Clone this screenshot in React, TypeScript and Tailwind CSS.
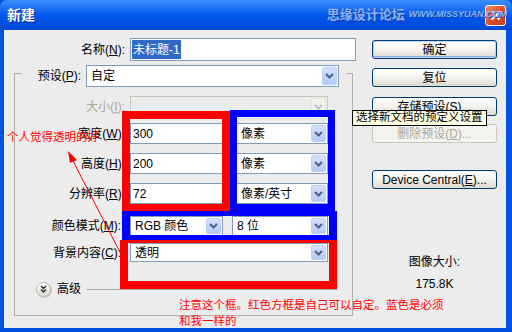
import clsx from "clsx";
import type { ReactNode } from "react";

const FONT = "font-['Liberation_Sans','Noto_Sans_CJK_SC',sans-serif]";

function Chevron({ muted }: { muted?: boolean }) {
    return (
        <svg width="9" height="6" viewBox="0 0 9 6">
            <path d="M1 1l3.5 3.5L8 1" fill="none" stroke={muted ? "#C3C1B6" : "#4D6185"} strokeWidth="2" />
        </svg>
    );
}

function Select({ value, className, disabled }: { value?: string; className: string; disabled?: boolean }) {
    return (
        <div
            className={clsx(
                "flex items-center border p-[1px]",
                disabled ? "border-[#C9C7BA] bg-[#ECECEC]" : "border-[#7F9DB9] bg-white",
                className
            )}
        >
            <span className="flex-1 pl-[3px] leading-none whitespace-nowrap">{value}</span>
            <span
                className={clsx(
                    "flex h-full w-[15px] items-center justify-center rounded-[2px] border",
                    disabled
                        ? "border-[#E4E2D8] bg-[#F1F0EA]"
                        : "border-[#BBCEF8] bg-gradient-to-b from-[#D3E1FD] to-[#B4CAF7]"
                )}
            >
                <Chevron muted={disabled} />
            </span>
        </div>
    );
}

function Input({ value, className }: { value: string; className: string }) {
    return (
        <div className={clsx("flex items-center border border-[#7F9DB9] bg-white pl-[2px]", className)}>
            <span className="leading-none">{value}</span>
        </div>
    );
}

function Btn({ children, def, disabled, className }: { children: ReactNode; def?: boolean; disabled?: boolean; className?: string }) {
    return (
        <div
            className={clsx(
                "flex w-[125px] h-[19px] items-center justify-center rounded-[3px] border leading-none",
                disabled
                    ? "border-[#C9C7BA] bg-[#F4F3EE] text-[#ACA899]"
                    : "border-[#003C74] bg-gradient-to-b from-white via-[#F4F3EE] to-[#DCD9CD]",
                def && "shadow-[inset_0_0_0_1px_#BCD4F6,inset_0_-1px_0_1px_#89ADE4]",
                className
            )}
        >
            {children}
        </div>
    );
}

function Row({ label, mt, h, children }: { label: ReactNode; mt: string; h: string; children: ReactNode }) {
    return (
        <div className={clsx("flex items-center", mt, h)}>
            <span className="w-[110px] text-right whitespace-nowrap">{label}</span>
            <div className="ml-[5px] flex h-full items-center">{children}</div>
        </div>
    );
}

function TitleBar() {
    return (
        <div className="relative flex h-[30px] items-center rounded-t-[7px] bg-gradient-to-b from-[#3D8EF8] via-[#0058EE] to-[#0047D6] px-[7px]">
            <span className="text-[14px] font-bold text-white [text-shadow:1px_1px_0_#0A1E8C]">新建</span>
            <div className="absolute right-[6px] top-[5px] flex h-[21px] w-[21px] items-center justify-center rounded-[3px] border border-white bg-gradient-to-br from-[#F08A6A] via-[#E0502A] to-[#C8381A]">
                <svg width="11" height="11" viewBox="0 0 11 11">
                    <path d="M1.5 1.5l8 8M9.5 1.5l-8 8" stroke="white" strokeWidth="2.2" />
                </svg>
            </div>
            <span className="relative ml-auto mr-[4px] text-[13px] font-bold text-[#8DB6F2] [text-shadow:1px_1px_0_#1C3FA8]">
                思缘设计论坛
            </span>
            <span className="relative mr-[-2px] text-[9px] font-bold italic text-[#8DB6F2] [text-shadow:1px_1px_0_#1C3FA8]">
                WWW.MISSYUAN.COM
            </span>
        </div>
    );
}

export default function App() {
    return (
        <div className={clsx("relative flex h-[332px] w-[512px] flex-col overflow-hidden bg-[#0053E1] text-[12px] text-black", FONT)}>
            <TitleBar />
            <div className="mb-[4px] ml-[4px] mr-[6px] flex flex-1 bg-[#ECECEC]">
                {/* left column */}
                <div className="flex w-[354px] flex-col">
                    <div className="mt-[8px] flex h-[23px] items-center">
                        <span className="w-[121px] text-right">
                            名称(<u>N</u>):
                        </span>
                        <div className="ml-[5px] flex h-full w-[226px] items-center border border-[#7F9DB9] bg-white p-[1px]">
                            <span className="flex h-full items-center bg-[#316AC5] px-[1px] text-white">未标题-1</span>
                        </div>
                    </div>

                    <div className="ml-[10px] mt-[12px] flex w-[339px] flex-col border border-[#B2B0A6] pb-[18px]">
                        <div className="-mt-[9px] ml-[7px] flex h-[22px] w-[325px] items-center bg-[#ECECEC]">
                            <span className="w-[59px] text-right">
                                预设(<u>P</u>):
                            </span>
                            <Select value="自定" className="ml-[5px] h-full w-[253px]" />
                        </div>

                        <Row label={<span className="text-[#ACA899]">大小(<u>I</u>):</span>} mt="mt-[9px]" h="h-[21px]">
                            <Select disabled className="h-full w-[198px]" />
                        </Row>
                        <Row label={<>宽度(<u>W</u>):</>} mt="mt-[6px]" h="h-[21px]">
                            <Input value="300" className="h-full w-[94px]" />
                            <Select value="像素" className="ml-[12px] h-full w-[92px]" />
                        </Row>
                        <Row label={<>高度(<u>H</u>):</>} mt="mt-[9px]" h="h-[21px]">
                            <Input value="200" className="h-full w-[94px]" />
                            <Select value="像素" className="ml-[12px] h-full w-[92px]" />
                        </Row>
                        <Row label={<>分辨率(<u>R</u>):</>} mt="mt-[9px]" h="h-[21px]">
                            <Input value="72" className="h-full w-[94px]" />
                            <Select value="像素/英寸" className="ml-[12px] h-full w-[92px]" />
                        </Row>
                        <Row label={<span className="pr-[4px]">颜色模式(<u>M</u>):</span>} mt="mt-[12px]" h="h-[20px]">
                            <Select value="RGB 颜色" className="h-full w-[93px]" />
                            <Select value="8 位" className="ml-[9px] h-full w-[96px]" />
                        </Row>
                        <Row label={<span className="pr-[4px]">背景内容(<u>C</u>):</span>} mt="mt-[7px]" h="h-[19px]">
                            <Select value="透明" className="h-full w-[198px]" />
                        </Row>

                        <div className="ml-[21px] mt-[19px] flex h-[16px] items-center">
                            <span className="flex h-[15px] w-[15px] items-center justify-center rounded-full border border-[#B8B6AC] bg-gradient-to-b from-white to-[#DEDCD2] shadow-[1px_1px_1px_#C8C6BC]">
                                <svg width="7" height="8" viewBox="0 0 7 8">
                                    <path d="M1 1l2.5 2.5L6 1M1 4.5l2.5 2.5L6 4.5" fill="none" stroke="#222" strokeWidth="1.4" />
                                </svg>
                            </span>
                            <span className="ml-[6px]">高级</span>
                            <span className="ml-[6px] h-px w-[250px] bg-[#ACA899]" />
                        </div>
                    </div>
                </div>

                {/* right column */}
                <div className="ml-[14px] flex w-[125px] flex-col items-center">
                    <Btn def className="mt-[10px]">确定</Btn>
                    <Btn className="mt-[9px]">复位</Btn>
                    <Btn className="mt-[10px]">存储预设(S)...</Btn>
                    <Btn disabled className="mt-[8px]">
                        删除预设(<u>D</u>)...
                    </Btn>
                    <Btn className="mt-[27px]">
                        Device Central(<u>E</u>)...
                    </Btn>
                    <span className="mt-[66px] leading-[14px]">图像大小:</span>
                    <span className="mt-[8px] leading-[14px]">175.8K</span>
                </div>
            </div>

            {/* annotations */}
            <div className="absolute left-[120px] top-[240px] h-[49px] w-[217px] border-[8px] border-t-[3px] border-[#FF0000]" />
            <div className="absolute left-[122px] top-[111px] h-[101px] w-[108px] border-[8px] border-[#FF0000]" />
            <div className="absolute left-[230px] top-[110px] h-[101px] w-[105px] border-[7px] border-[#0000FF]" />
            <div className="absolute left-[122px] top-[211px] h-[29px] w-[215px] border-[8px] border-y-[5px] border-[#0000FF]" />

            <svg className="pointer-events-none absolute left-0 top-0" width="512" height="332">
                <line x1="123" y1="258" x2="71" y2="157" stroke="#FF0000" strokeWidth="1" />
                <polygon points="68,151 77,160 70,163" fill="#FF0000" />
            </svg>

            <span className="absolute left-[7px] top-[130px] text-[11.5px] leading-[14px] text-[#FF0000]">个人觉得透明的好</span>
            <div className="absolute left-[179px] top-[297px] text-[11.5px] leading-[16px] text-[#FF0000]">
                <div>注意这个框。红色方框是自己可以自定。蓝色是必须</div>
                <div>和我一样的</div>
            </div>

            <div className="absolute left-[352px] top-[110px] flex h-[16px] w-[135px] items-center whitespace-nowrap border border-black bg-[#FFFFE1] pl-[3px] text-[11.5px] leading-none">
                选择新文档的预定义设置
            </div>
        </div>
    );
}
